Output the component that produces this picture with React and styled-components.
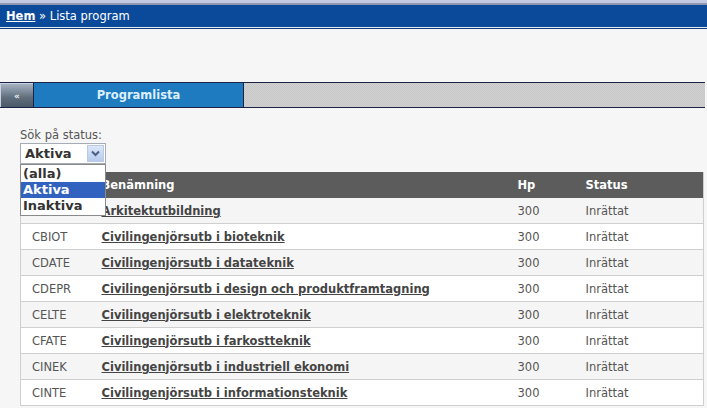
import React from "react";
import styled, { createGlobalStyle } from "styled-components";

const GlobalStyle = createGlobalStyle`
  html, body { margin: 0; padding: 0; }
  body {
    background: #f6f6f6;
    font-family: "DejaVu Sans", Verdana, sans-serif;
    overflow: hidden;
  }
`;

const TopBar = styled.div`
  height: 22px;
  border-top: 3px solid #c3c9e0;
  box-shadow: inset 0 2px 0 #8f98b0;
  background: #0b4a9a;
  border-bottom: 1px solid #e6f0f0;
  outline: 1px solid #123a80;
  padding: 2px 0 0 6px;
  display: flex;
  align-items: center;
  font-size: 11.5px;
  color: #ffffff;
  margin-bottom: 1px;
`;

const Crumb = styled.a`
  color: #ffffff;
  font-weight: bold;
  text-decoration: underline;
`;

const CrumbRest = styled.span`
  white-space: pre;
`;

const TabBar = styled.div`
  margin-top: 54px;
  height: 24px;
  display: flex;
  border-top: 1px solid #1c2244;
  border-bottom: 1px solid #1c2244;
  margin-right: 2px;
  background: #1c2244;
`;

const BackButton = styled.div`
  width: 33px;
  border-top: 1px solid #c9d2e2;
  border-left: 1px solid #c9d2e2;
  box-sizing: border-box;
  background: linear-gradient(#a6b2c0, #5e6c7c 60%, #4c5968);
  color: #e8eef6;
  font-size: 9px;
  font-weight: bold;
  display: flex;
  align-items: center;
  justify-content: center;
  margin-right: 1px;
`;

const Tab = styled.div`
  width: 209px;
  background: #1f7bc0;
  color: #dcefff;
  font-weight: bold;
  font-size: 11.5px;
  display: flex;
  align-items: center;
  justify-content: center;
  margin-right: 1px;
`;

const TabFill = styled.div`
  flex: 1;
  background: repeating-conic-gradient(#c6c6c6 0 25%, #d2d2d2 0 50%) 0 0 / 2px 2px;
`;

const Content = styled.div`
  padding: 20px 3px 0 20px;
`;

const Label = styled.div`
  font-size: 11.5px;
  line-height: 14px;
  color: #555;
`;

const SelectWrap = styled.div`
  position: relative;
  width: 86px;
  margin-top: 1px;
`;

const SelectBox = styled.div`
  height: 21px;
  box-sizing: border-box;
  border: 1px solid #a5acb5;
  background: #fff;
  display: flex;
  align-items: center;
  justify-content: space-between;
  padding: 1px 1px 1px 4px;
  font-size: 13px;
  font-weight: bold;
  color: #333;
`;

const ArrowBtn = styled.div`
  width: 17px;
  height: 17px;
  box-sizing: border-box;
  border: 1px solid #b9c9e6;
  background: linear-gradient(#dce7f8, #b7cbee);
  display: flex;
  align-items: center;
  justify-content: center;
`;

const DropList = styled.div`
  position: absolute;
  left: 0;
  top: 21px;
  width: 86px;
  box-sizing: border-box;
  border: 1px solid #8a8a8a;
  background: #fff;
  z-index: 2;
  padding: 1px 0 1px;
`;

const Option = styled.div`
  height: 16px;
  line-height: 16px;
  padding-left: 2px;
  font-size: 13px;
  font-weight: bold;
  color: ${(p) => (p.$selected ? "#fff" : "#333")};
  background: ${(p) => (p.$selected ? "#3162c0" : "transparent")};
`;

const Table = styled.table`
  margin-top: 8px;
  width: 684px;
  border-collapse: collapse;
  font-size: 11.5px;
  border-left: 1px solid #cfcfcf;
  border-right: 1px solid #cfcfcf;
`;

const Th = styled.th`
  background: #5c5c5c;
  color: #fff;
  font-weight: bold;
  text-align: left;
  height: 26px;
  padding: 0 0 0 11px;
  width: ${(p) => p.$w || "auto"};
  box-sizing: border-box;
`;

const Tr = styled.tr`
  background: ${(p) => (p.$odd ? "#f5f5f5" : "#ffffff")};
  border-bottom: 1px solid #cfcfcf;
`;

const Td = styled.td`
  height: 25px;
  padding: 0 0 0 11px;
  color: #555;
  white-space: nowrap;
`;

const NameLink = styled.a`
  color: #444;
  font-weight: bold;
  text-decoration: underline;
`;

const rows = [
  ["ARKIT", "Arkitektutbildning"],
  ["CBIOT", "Civilingenjörsutb i bioteknik"],
  ["CDATE", "Civilingenjörsutb i datateknik"],
  ["CDEPR", "Civilingenjörsutb i design och produktframtagning"],
  ["CELTE", "Civilingenjörsutb i elektroteknik"],
  ["CFATE", "Civilingenjörsutb i farkostteknik"],
  ["CINEK", "Civilingenjörsutb i industriell ekonomi"],
  ["CINTE", "Civilingenjörsutb i informationsteknik"],
];

export default function App() {
  return (
    <>
      <GlobalStyle />
      <TopBar>
        <Crumb>Hem</Crumb>
        <CrumbRest> » Lista program</CrumbRest>
      </TopBar>
      <TabBar>
        <BackButton>«</BackButton>
        <Tab>Programlista</Tab>
        <TabFill />
      </TabBar>
      <Content>
        <Label>Sök på status:</Label>
        <SelectWrap>
          <SelectBox>
            <span>Aktiva</span>
            <ArrowBtn>
              <svg width="9" height="7" viewBox="0 0 9 7">
                <path d="M1 1.5 L4.5 5 L8 1.5" fill="none" stroke="#4a5f86" strokeWidth="2" />
              </svg>
            </ArrowBtn>
          </SelectBox>
          <DropList>
            <Option>(alla)</Option>
            <Option $selected>Aktiva</Option>
            <Option>Inaktiva</Option>
          </DropList>
        </SelectWrap>
        <Table>
          <thead>
            <tr>
              <Th $w="70px"></Th>
              <Th $w="416px">Benämning</Th>
              <Th $w="68px">Hp</Th>
              <Th>Status</Th>
            </tr>
          </thead>
          <tbody>
            {rows.map(([code, name], i) => (
              <Tr key={code} $odd={i % 2 === 0}>
                <Td>{code}</Td>
                <Td>
                  <NameLink>{name}</NameLink>
                </Td>
                <Td>300</Td>
                <Td>Inrättat</Td>
              </Tr>
            ))}
          </tbody>
        </Table>
      </Content>
    </>
  );
}
